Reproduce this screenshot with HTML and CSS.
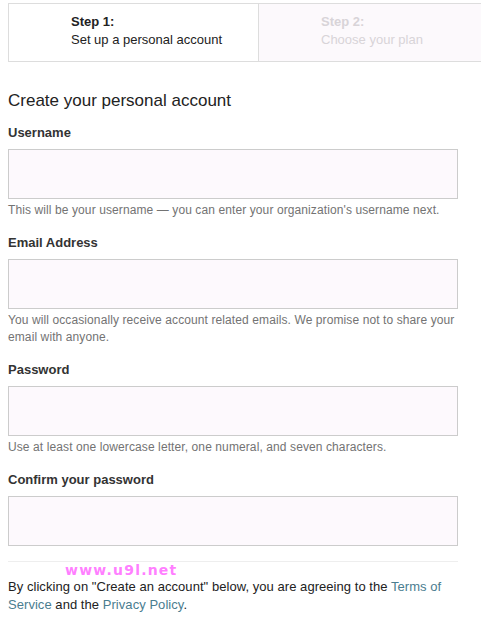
FILE: index.html
```html
<!DOCTYPE html>
<html>
<head>
<meta charset="utf-8">
<link rel="stylesheet" href="styles.css">
</head>
<body>
<div class="steps">
  <div class="step current">
    <strong>Step 1:</strong>
    <span>Set up a personal account</span>
  </div>
  <div class="step">
    <strong>Step 2:</strong>
    <span>Choose your plan</span>
  </div>
</div>
<form class="form">
  <h1 class="title">Create your personal account</h1>
  <div class="field">
    <label class="label">Username</label>
    <div class="input"></div>
    <p class="hint">This will be your username — you can enter your organization's username next.</p>
  </div>
  <div class="field">
    <label class="label">Email Address</label>
    <div class="input"></div>
    <p class="hint">You will occasionally receive account related emails. We promise not to share your email with anyone.</p>
  </div>
  <div class="field">
    <label class="label">Password</label>
    <div class="input"></div>
    <p class="hint">Use at least one lowercase letter, one numeral, and seven characters.</p>
  </div>
  <div class="field">
    <label class="label">Confirm your password</label>
    <div class="input"></div>
  </div>
  <hr class="rule">
  <div class="terms">
    <span class="watermark">www.u9l.net</span>
    <p class="terms-line">By clicking on "Create an account" below, you are agreeing to the <a href="#">Terms of</a></p>
    <p class="terms-line"><a href="#">Service</a> and the <a href="#">Privacy Policy</a>.</p>
  </div>
</form>
</body>
</html>
```
FILE: styles.css
```css
html, body {
  margin: 0;
  padding: 0;
  background: #fff;
}
body {
  font-family: "Liberation Sans", Arial, sans-serif;
  color: #333;
}
.steps {
  display: flex;
  margin: 3px 0 0 8px;
  height: 59px;
  box-sizing: border-box;
  border-top: 1px solid #ddd;
  border-bottom: 1px solid #ddd;
  border-left: 1px solid #ddd;
}
.step {
  display: flex;
  flex-direction: column;
  padding: 9px 0 0 62px;
  font-size: 13px;
  line-height: 18px;
  color: #d8d4d8;
  background: #fcf9fc;
  flex: 1;
}
.step.current {
  flex: 0 0 250px;
  box-sizing: border-box;
  border-right: 1px solid #ddd;
  color: #222;
  background: #fff;
}
.step strong {
  font-weight: bold;
}
.form {
  margin: 0 0 0 8px;
  width: 450px;
}
.title {
  margin: 28px 0 0;
  font-size: 17px;
  line-height: 21px;
  font-weight: normal;
  color: #222;
}
.field {
  margin-top: 14px;
}
.field + .field {
  margin-top: 16px;
}
.label {
  display: block;
  font-size: 13px;
  line-height: 16px;
  font-weight: bold;
  color: #333;
  margin-bottom: 8px;
}
.input {
  height: 50px;
  box-sizing: border-box;
  border: 1px solid #ccc;
  background: #fdf9fd;
}
.hint {
  margin: 3px 0 0;
  font-size: 12px;
  line-height: 17px;
  letter-spacing: 0.1px;
  color: #737373;
}
.rule {
  margin: 15px 0 0;
  border: 0;
  border-top: 1px solid #eee;
  height: 0;
}
.terms {
  position: relative;
  padding-top: 16px;
}
.terms-line {
  margin: 0;
  font-size: 13px;
  line-height: 18px;
  letter-spacing: 0.05px;
  color: #222;
  white-space: nowrap;
}
.terms a {
  color: #4a7d90;
  text-decoration: none;
}
.watermark {
  position: absolute;
  left: 57px;
  top: 2px;
  font-family: "DejaVu Sans", sans-serif;
  font-weight: bold;
  font-size: 14px;
  line-height: 13px;
  letter-spacing: 1.2px;
  color: #ff7fff;
}
```
